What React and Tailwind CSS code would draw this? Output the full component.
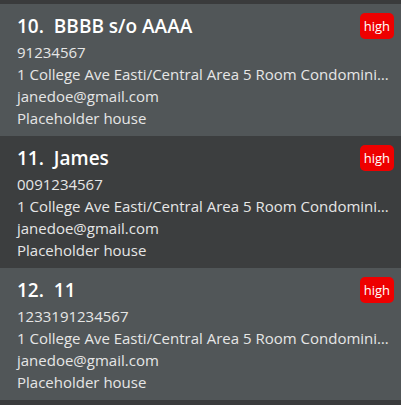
import React from "react";

const people = [
  { idx: 10, name: "BBBB s/o AAAA", phone: "91234567", bg: "bg-[#515658]" },
  { idx: 11, name: "James", phone: "0091234567", bg: "bg-[#3c3e3f]" },
  { idx: 12, name: "11", phone: "1233191234567", bg: "bg-[#515658]" },
];

function PersonCard({ person }) {
  return (
    <div className={`${person.bg} h-[132px] pl-[17px] pr-[7px] pt-[9px]`}>
      <div className="flex items-start justify-between h-[28px]">
        <div className="pt-[1px] text-[19px] leading-[24px] font-semibold text-white whitespace-pre">
          {person.idx}.{"  "}{person.name}
        </div>
        <span className="bg-[#ee0000] text-white text-[13px] leading-[26px] h-[26px] px-[4px] rounded-[5px]">
          high
        </span>
      </div>
      <div className="text-[15px] leading-[22px] text-[#e6e6e6]">
        <div>{person.phone}</div>
        <div className="truncate pr-[5px]">
          1 College Ave Easti/Central Area 5 Room Condominium
        </div>
        <div>janedoe@gmail.com</div>
        <div>Placeholder house</div>
      </div>
    </div>
  );
}

export default function App() {
  return (
    <div
      className="w-[401px] h-[405px] bg-[#3a3b3c] pt-[4px] overflow-hidden"
      style={{ fontFamily: '"Open Sans", "Noto Sans", sans-serif' }}
    >
      {people.map((p) => (
        <PersonCard key={p.idx} person={p} />
      ))}
    </div>
  );
}
